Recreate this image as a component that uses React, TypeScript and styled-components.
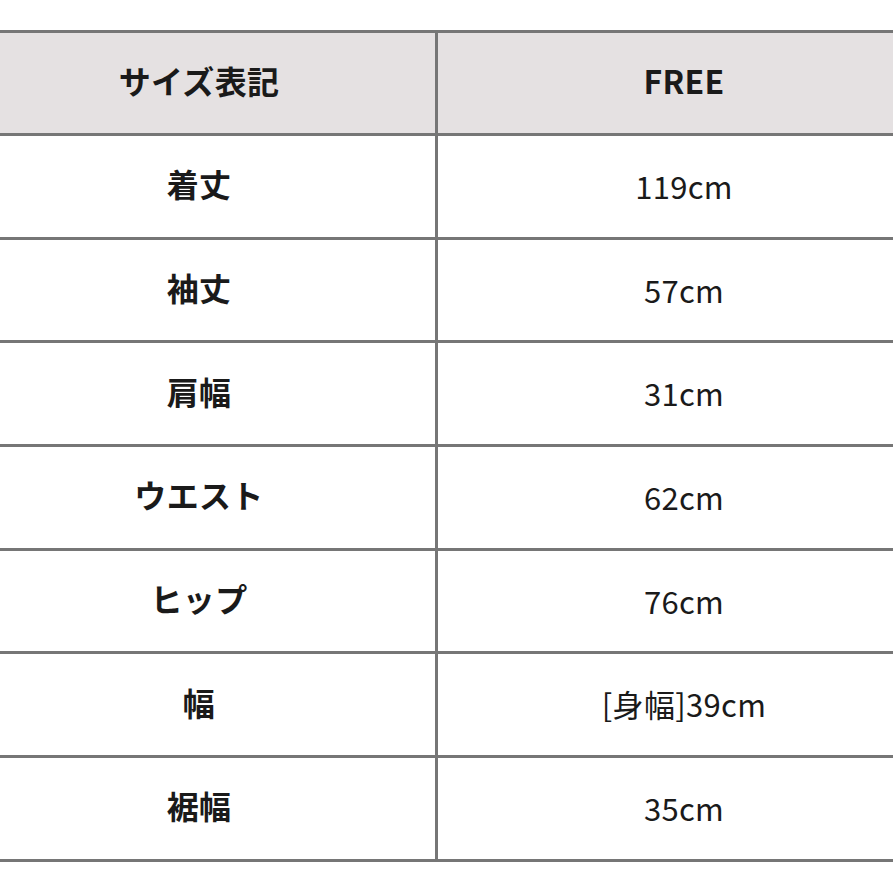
import React from "react";
import styled, { createGlobalStyle } from "styled-components";

const GlobalStyle = createGlobalStyle`
  html, body {
    margin: 0;
    padding: 0;
    background: #ffffff;
    overflow: hidden;
  }
  body {
    font-family: "Noto Sans CJK JP", "Noto Sans", sans-serif;
    color: #1a1a1a;
  }
`;

const Page = styled.div`
  width: 893px;
  height: 893px;
  padding-top: 30px;
  box-sizing: border-box;
`;

const Table = styled.div`
  margin-left: -37px;
  width: 967px;
  border-top: 3px solid #767676;
`;

const Row = styled.div<{ $header?: boolean }>`
  display: grid;
  grid-template-columns: 472px 495px;
  height: ${(p) => (p.$header ? 100 : 100.7)}px;
  border-bottom: 3px solid #767676;
  background: ${(p) => (p.$header ? "#e5e1e2" : "#ffffff")};
`;

const Cell = styled.div<{ $right?: boolean; $bold?: boolean }>`
  display: flex;
  align-items: center;
  justify-content: center;
  padding-bottom: ${(p) => (p.$bold ? 6 : 2)}px;
  border-left: ${(p) => (p.$right ? "3px solid #767676" : "none")};
  font-size: ${(p) => (p.$bold ? 32 : 31)}px;
  font-weight: ${(p) => (p.$bold ? 700 : 400)};
  letter-spacing: 0.01em;
`;

const rows: [string, string][] = [
  ["着丈", "119cm"],
  ["袖丈", "57cm"],
  ["肩幅", "31cm"],
  ["ウエスト", "62cm"],
  ["ヒップ", "76cm"],
  ["幅", "[身幅]39cm"],
  ["裾幅", "35cm"],
];

export default function App() {
  return (
    <Page>
      <GlobalStyle />
      <Table>
        <Row $header>
          <Cell $bold>サイズ表記</Cell>
          <Cell $right $bold>
            FREE
          </Cell>
        </Row>
        {rows.map(([label, value]) => (
          <Row key={label}>
            <Cell $bold>{label}</Cell>
            <Cell $right>{value}</Cell>
          </Row>
        ))}
      </Table>
    </Page>
  );
}
